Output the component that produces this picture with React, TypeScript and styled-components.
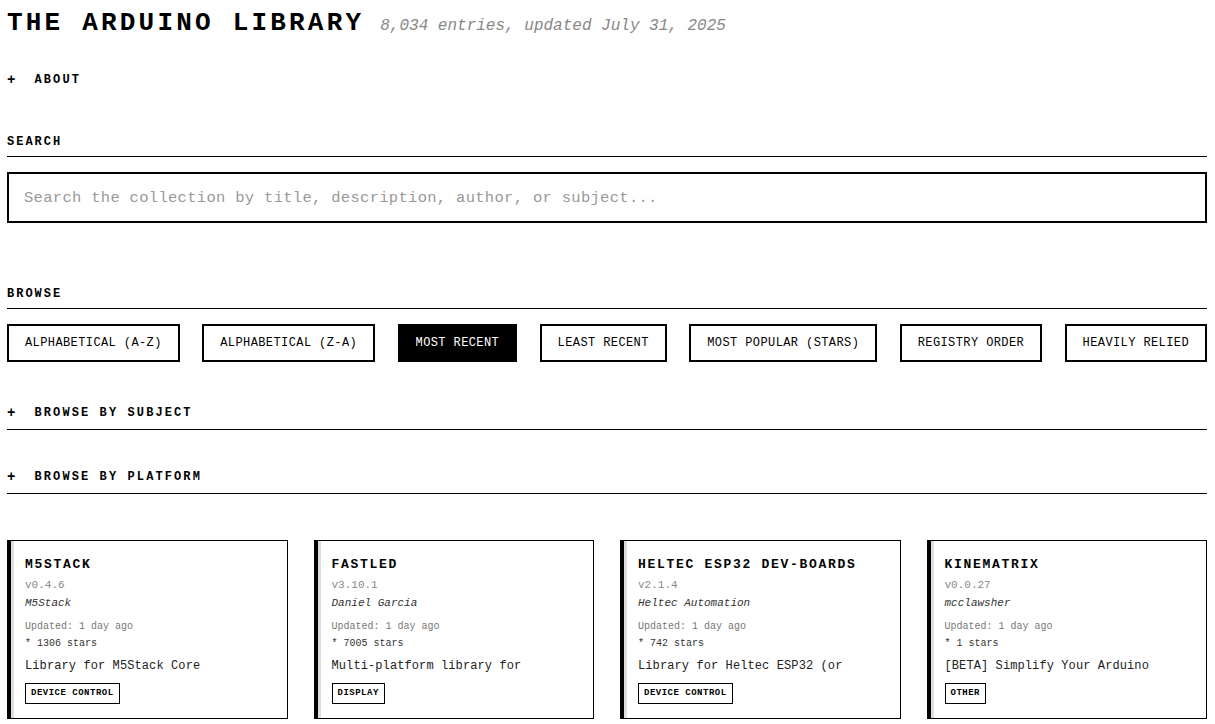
import React from "react";
import styled, { createGlobalStyle } from "styled-components";

const Global = createGlobalStyle`
  html, body { margin: 0; padding: 0; background: #fff; }
  body { font-family: "Liberation Mono", "Courier New", monospace; color: #000; }
  * { box-sizing: border-box; }
`;

const Page = styled.div`
  padding: 8px 8px 0 7px;
`;

const Header = styled.header`
  display: flex;
  align-items: baseline;
  gap: 16px;
`;

const Title = styled.h1`
  margin: 0;
  font-size: 26px;
  font-weight: 700;
  letter-spacing: 3.2px;
  line-height: 30px;
`;

const Subtitle = styled.span`
  font-size: 16px;
  font-style: italic;
  color: #888;
`;

const Toggle = styled.div<{ $lined?: boolean }>`
  display: flex;
  align-items: center;
  gap: 17px;
  font-size: 12px;
  font-weight: 700;
  letter-spacing: 2.1px;
  padding: ${(p) => (p.$lined ? "0 0 8px" : "0")};
  border-bottom: ${(p) => (p.$lined ? "1px solid #000" : "none")};
  line-height: 16px;
`;

const Plus = styled.span`
  font-size: 14px;
`;

const Section = styled.section<{ $top: number }>`
  margin-top: ${(p) => p.$top}px;
`;

const Label = styled.h2`
  margin: 0;
  font-size: 12px;
  font-weight: 700;
  letter-spacing: 2px;
  line-height: 16px;
  padding-bottom: 6px;
  border-bottom: 1px solid #000;
`;

const SearchBox = styled.input`
  display: block;
  width: 100%;
  margin-top: 15px;
  height: 51px;
  border: 2px solid #000;
  padding: 0 15px;
  font-family: "Liberation Mono", "Courier New", monospace;
  font-size: 15.5px;
  letter-spacing: 0.3px;
  outline: none;
  &::placeholder { color: #999; }
`;

const ButtonRow = styled.div`
  display: flex;
  justify-content: space-between;
  flex-wrap: wrap;
  gap: 12px;
  margin-top: 15px;
`;

const SortButton = styled.button<{ $active?: boolean }>`
  height: 38px;
  padding: 0 16px;
  border: 2px solid #000;
  background: ${(p) => (p.$active ? "#000" : "#fff")};
  color: ${(p) => (p.$active ? "#fff" : "#000")};
  font-family: "Liberation Mono", "Courier New", monospace;
  font-size: 12px;
  letter-spacing: 0.4px;
  cursor: pointer;
`;

const Grid = styled.div`
  display: grid;
  grid-template-columns: repeat(4, 1fr);
  gap: 26px;
  margin-top: 46px;
`;

const Card = styled.article`
  border: 1px solid #000;
  border-left: 4px solid #000;
  box-shadow: inset 3px 0 0 #ddd;
  padding: 16px 16px 14px 14px;
  display: flex;
  flex-direction: column;
  align-items: flex-start;
`;

const CardTitle = styled.h3`
  margin: 0;
  font-size: 13px;
  font-weight: 700;
  letter-spacing: 1.7px;
  line-height: 16px;
`;

const Version = styled.div`
  margin-top: 5px;
  font-size: 11px;
  color: #888;
  line-height: 14px;
`;

const Author = styled.div`
  margin-top: 4px;
  font-size: 11px;
  font-style: italic;
  color: #333;
  line-height: 14px;
`;

const Meta = styled.div<{ $top: number; $dark?: boolean }>`
  margin-top: ${(p) => p.$top}px;
  font-size: 10px;
  color: ${(p) => (p.$dark ? "#333" : "#777")};
  line-height: 13px;
`;

const Desc = styled.p`
  margin: 8px 0 0;
  font-size: 12px;
  color: #222;
  line-height: 16px;
  white-space: nowrap;
  letter-spacing: 0.1px;
`;

const Tag = styled.span`
  display: block;
  margin-top: 9px;
  border: 1px solid #000;
  padding: 3px 5px;
  font-size: 9px;
  font-weight: 700;
  letter-spacing: 0.5px;
  line-height: 13px;
`;

const sorts = [
  "ALPHABETICAL (A-Z)",
  "ALPHABETICAL (Z-A)",
  "MOST RECENT",
  "LEAST RECENT",
  "MOST POPULAR (STARS)",
  "REGISTRY ORDER",
  "HEAVILY RELIED",
];

const libs = [
  { name: "M5STACK", v: "v0.4.6", author: "M5Stack", stars: 1306, desc: "Library for M5Stack Core", tag: "DEVICE CONTROL" },
  { name: "FASTLED", v: "v3.10.1", author: "Daniel Garcia", stars: 7005, desc: "Multi-platform library for", tag: "DISPLAY" },
  { name: "HELTEC ESP32 DEV-BOARDS", v: "v2.1.4", author: "Heltec Automation", stars: 742, desc: "Library for Heltec ESP32 (or", tag: "DEVICE CONTROL" },
  { name: "KINEMATRIX", v: "v0.0.27", author: "mcclawsher", stars: 1, desc: "[BETA] Simplify Your Arduino", tag: "OTHER" },
];

export default function App() {
  return (
    <Page>
      <Global />
      <Header>
        <Title>THE ARDUINO LIBRARY</Title>
        <Subtitle>8,034 entries, updated July 31, 2025</Subtitle>
      </Header>
      <Section $top={34}>
        <Toggle><Plus>+</Plus>ABOUT</Toggle>
      </Section>
      <Section $top={46}>
        <Label>SEARCH</Label>
        <SearchBox placeholder="Search the collection by title, description, author, or subject..." />
      </Section>
      <Section $top={63}>
        <Label>BROWSE</Label>
        <ButtonRow>
          {sorts.map((s) => (
            <SortButton key={s} $active={s === "MOST RECENT"}>{s}</SortButton>
          ))}
        </ButtonRow>
      </Section>
      <Section $top={43}>
        <Toggle $lined><Plus>+</Plus>BROWSE BY SUBJECT</Toggle>
      </Section>
      <Section $top={39}>
        <Toggle $lined><Plus>+</Plus>BROWSE BY PLATFORM</Toggle>
      </Section>
      <Grid>
        {libs.map((l) => (
          <Card key={l.name}>
            <CardTitle>{l.name}</CardTitle>
            <Version>{l.v}</Version>
            <Author>{l.author}</Author>
            <Meta $top={10}>Updated: 1 day ago</Meta>
            <Meta $top={4} $dark>* {l.stars} stars</Meta>
            <Desc>{l.desc}</Desc>
            <Tag>{l.tag}</Tag>
          </Card>
        ))}
      </Grid>
    </Page>
  );
}
